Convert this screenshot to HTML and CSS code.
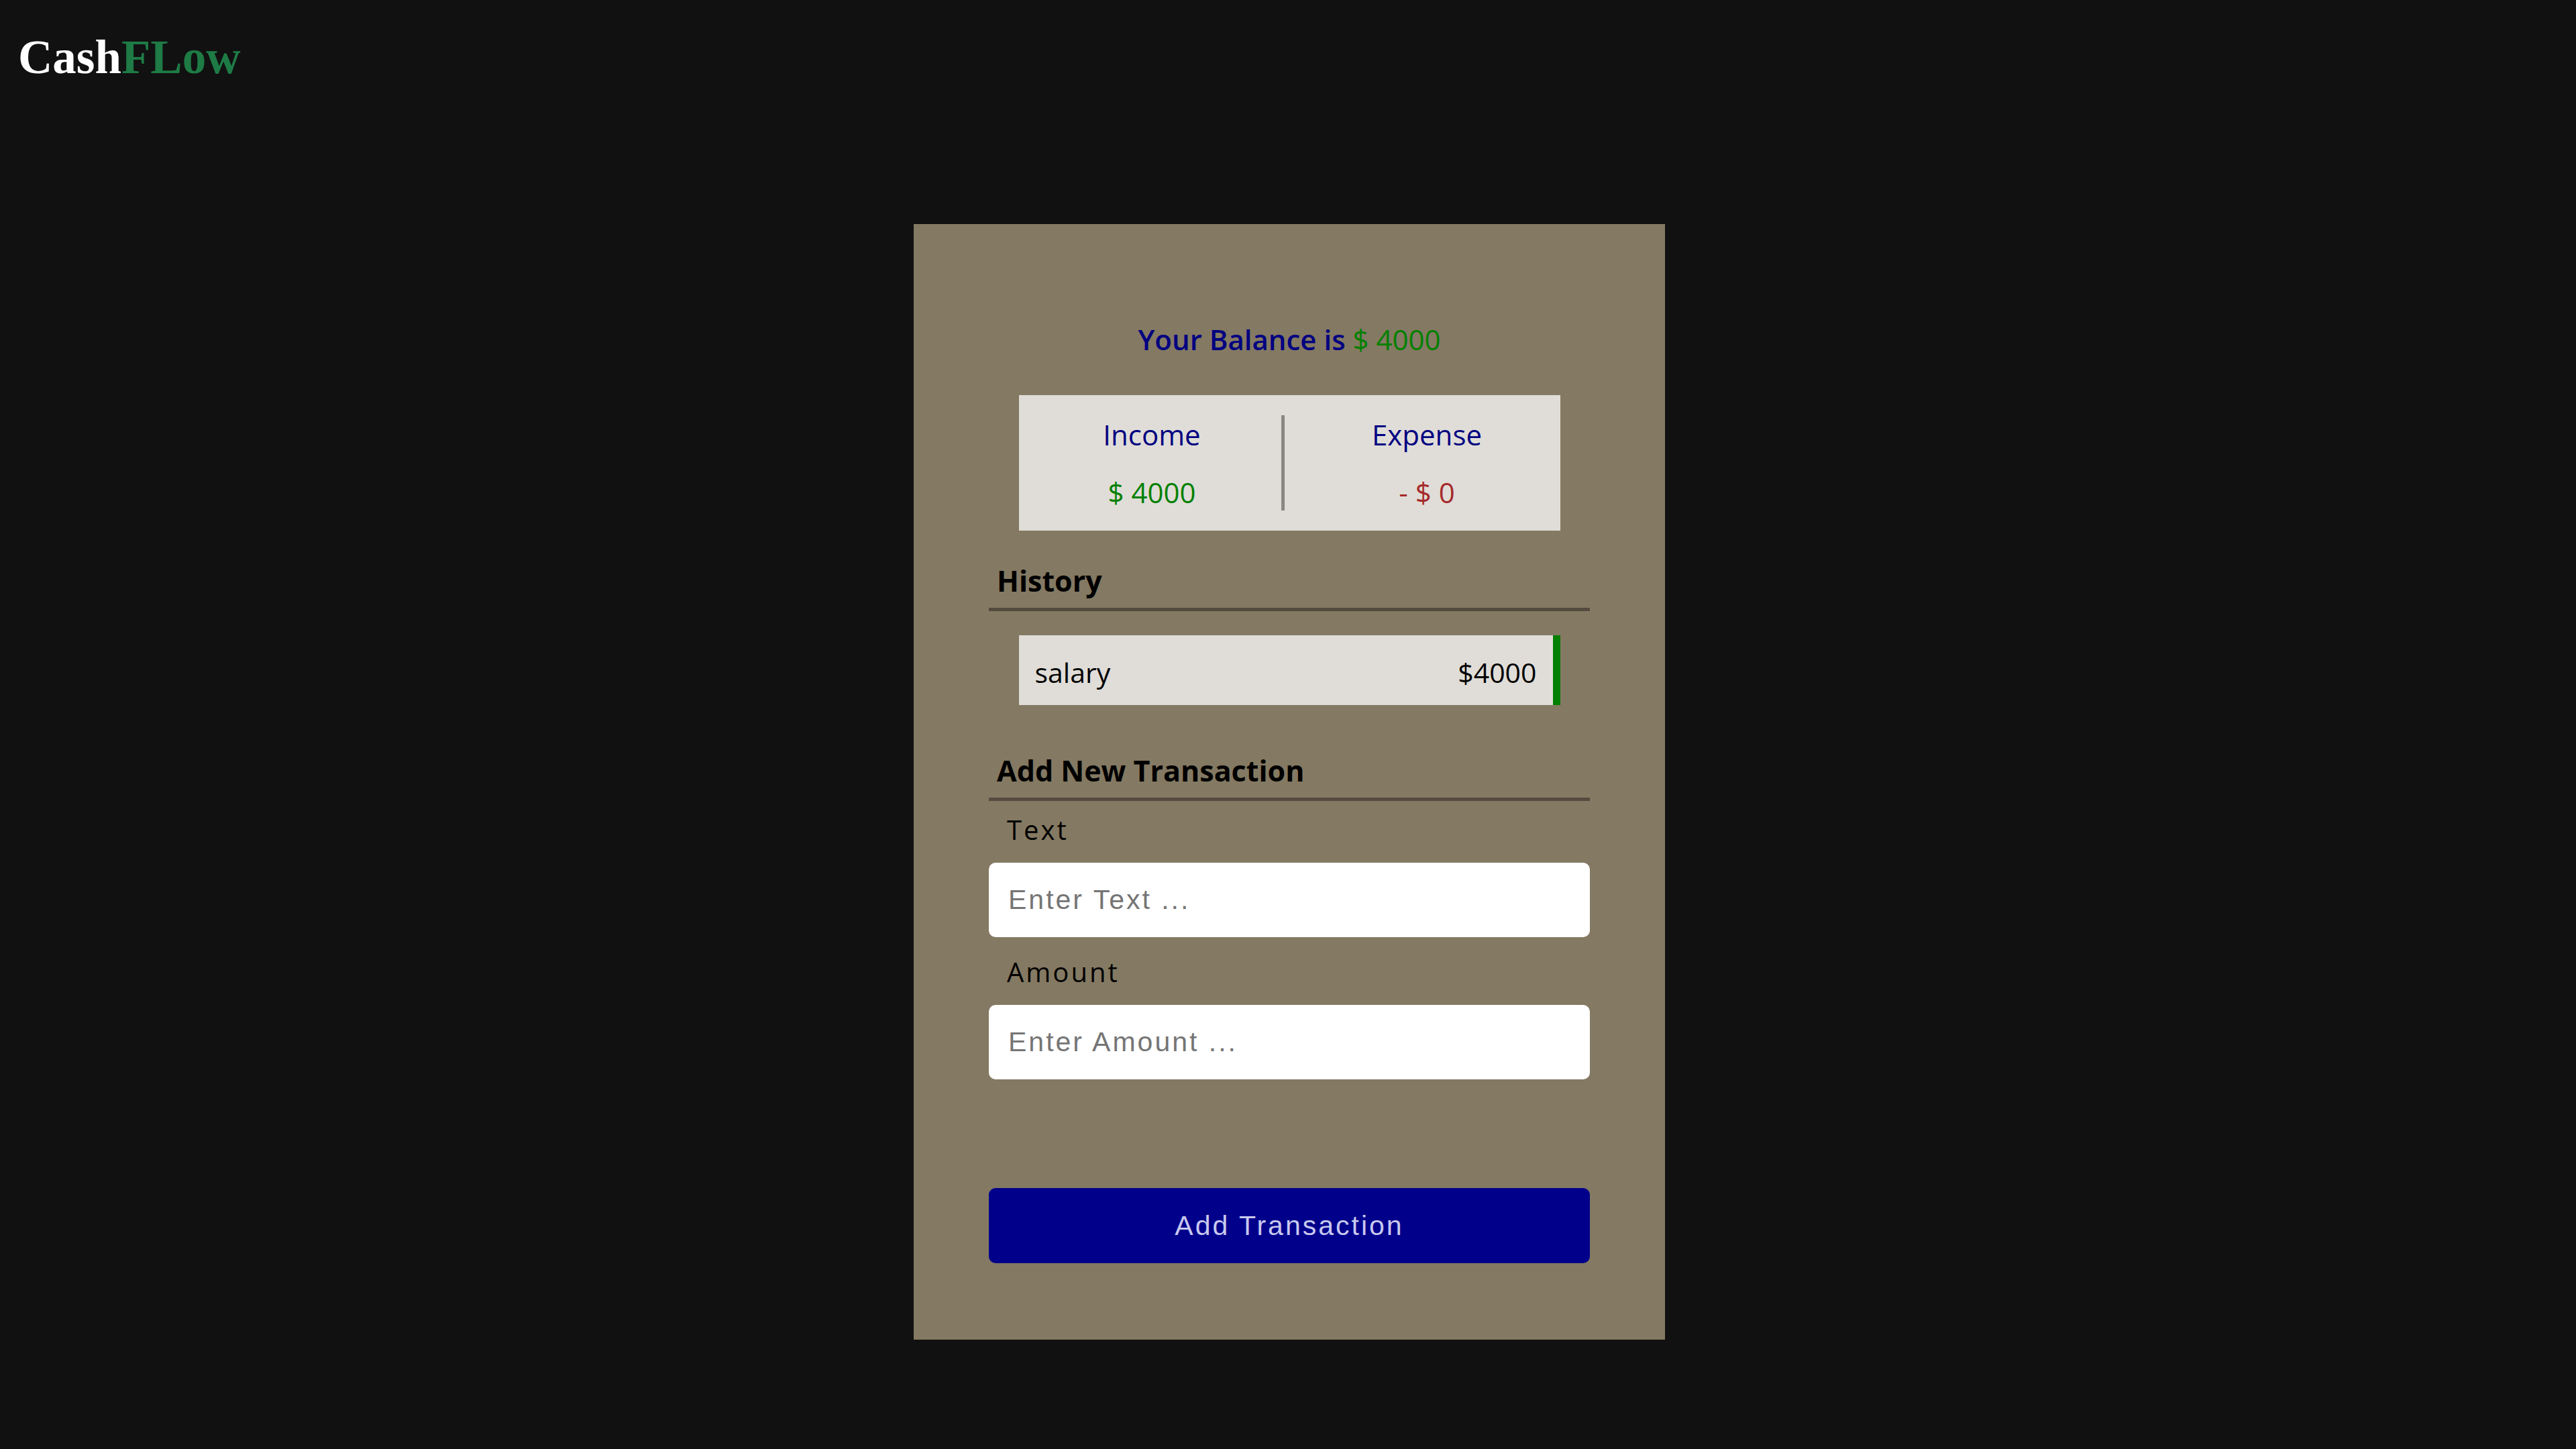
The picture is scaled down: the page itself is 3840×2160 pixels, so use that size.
FILE: index.html
```html
<!DOCTYPE html>
<html lang="en">
<head>
<meta charset="utf-8">
<title>CashFLow</title>
<link rel="stylesheet" href="styles.css">
</head>
<body>
<header class="header">
  <h1 class="logo">Cash<span class="logo-accent">FLow</span></h1>
</header>
<main class="card">
  <h2 class="balance">Your Balance is <span class="balance-amount">$ 4000</span></h2>
  <div class="summary">
    <div class="summary-col summary-col-left">
      <div class="summary-title">Income</div>
      <div class="summary-value income">$ 4000</div>
    </div>
    <div class="summary-divider"></div>
    <div class="summary-col summary-col-right">
      <div class="summary-title">Expense</div>
      <div class="summary-value expense">- $ 0</div>
    </div>
  </div>
  <h3 class="section-title">History</h3>
  <ul class="history">
    <li class="history-item plus"><span>salary</span><span>$4000</span></li>
  </ul>
  <h3 class="section-title section-title-add">Add New Transaction</h3>
  <form class="form">
    <label class="form-label form-label-first" for="text">Text</label>
    <input class="form-input" id="text" type="text" placeholder="Enter Text ...">
    <label class="form-label" for="amount">Amount</label>
    <input class="form-input" id="amount" type="number" placeholder="Enter Amount ...">
    <button class="form-button" type="button">Add Transaction</button>
  </form>
</main>
</body>
</html>
```

FILE: styles.css
```css
* { box-sizing: border-box; }

html, body {
  margin: 0;
  padding: 0;
  background: #111111;
}

body {
  font-family: "Open Sans", "Noto Sans", sans-serif;
  color: #000;
  min-height: 2160px;
}

.header {
  padding: 50px 0 0 27px;
  height: 121px;
}

.logo {
  margin: 0;
  font-family: "Liberation Serif", "DejaVu Serif", serif;
  font-weight: 700;
  font-size: 71px;
  line-height: 1;
  color: #ffffff;
}

.logo-accent { color: #1e7b45; }

.card {
  width: 1120px;
  height: 1663px;
  margin: 213px 0 0 calc(50% - 558px);
  padding: 151px 112px 0;
  background: #847962;
  display: flex;
  flex-direction: column;
}

.balance {
  margin: 0;
  text-align: center;
  font-size: 42px;
  line-height: 1;
  font-weight: 600;
  color: #000080;
}

.balance-amount {
  font-weight: 400;
  color: #008000;
}

.summary {
  width: 807px;
  height: 202px;
  margin: 62px auto 0;
  padding: 30px 0;
  background: #e0ddd8;
  display: flex;
}

.summary-col {
  flex: 1;
  display: flex;
  flex-direction: column;
  align-items: center;
  gap: 44px;
  padding-top: 8px;
  font-size: 42px;
  line-height: 1;
  font-weight: 500;
}

.summary-col-left {
  flex: 0 0 391px;
  padding-left: 6px;
}

.summary-col-right { padding-left: 14px; }

.summary-title { color: #000080; }
.summary-value.income { color: #008000; }
.summary-value.expense { color: #a52a2a; }

.summary-divider {
  width: 5px;
  background: #8a8784;
}

.section-title {
  margin: 53px 0 0;
  padding: 0 0 19px 12px;
  font-size: 43px;
  line-height: 1;
  font-weight: 700;
  border-bottom: 5px solid #544b3e;
}

.section-title-add { margin-top: 76px; }

.history {
  list-style: none;
  margin: 36px 0 0;
  padding: 0;
}

.history-item {
  width: 807px;
  height: 104px;
  margin: 0 auto;
  padding: 6px 24px 0;
  background: #e0ddd8;
  border-right: 11px solid #008000;
  display: flex;
  justify-content: space-between;
  align-items: center;
  font-size: 41px;
  line-height: 1;
}

.form {
  display: flex;
  flex-direction: column;
}

.form-label {
  margin: 32px 0 0;
  padding-left: 27px;
  font-size: 40px;
  line-height: 1;
  letter-spacing: 3px;
  font-weight: 500;
}

.form-label-first { margin-top: 23px; }

.form-input {
  margin-top: 29px;
  height: 111px;
  width: 100%;
  border: none;
  border-radius: 10px;
  background: #ffffff;
  padding: 0 29px;
  font-family: "Liberation Sans", Arial, sans-serif;
  font-size: 41px;
  letter-spacing: 3px;
  outline: none;
}

.form-input::placeholder { color: #757575; }

.form-button {
  margin-top: 162px;
  height: 112px;
  width: 100%;
  border: none;
  border-radius: 10px;
  background: #00008b;
  color: #c8c8ee;
  font-family: "Liberation Sans", Arial, sans-serif;
  font-size: 41px;
  letter-spacing: 3px;
}
```
